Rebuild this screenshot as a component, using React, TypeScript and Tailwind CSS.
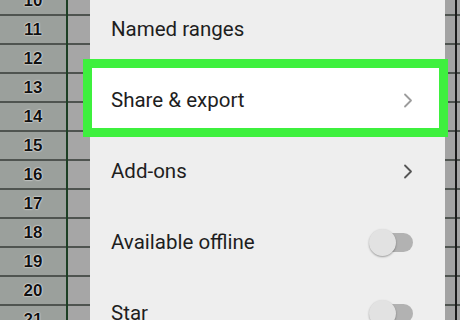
import { ReactNode } from 'react';

const rowNumbers = [10, 11, 12, 13, 14, 15, 16, 17, 18, 19, 20, 21];

type GridColumnProps = {
  width: string;
  bg: string;
  numbered?: boolean;
};

// strip of spreadsheet cells behind the menu
const GridColumn = ({ width, bg, numbered }: GridColumnProps) => {
  return (
    <div className={`${width} ${bg} h-full overflow-hidden shrink-0`}>
      <div className="flex flex-col -mt-[13px]">
        {rowNumbers.map((n) => (
          <div
            key={n}
            className="h-[29px] shrink-0 flex items-center justify-center border-b-2 border-[#4f5450]"
          >
            {numbered && (
              <span className="text-[17px] font-bold text-[#111] [font-family:'Liberation_Sans',Arial,sans-serif] [text-shadow:0_0_2px_#ffffff,0_0_1px_#ffffff]">
                {n}
              </span>
            )}
          </div>
        ))}
      </div>
    </div>
  );
};

const Chevron = ({ color }: { color: string }) => (
  <svg width="10" height="15" viewBox="0 0 10 15" fill="none">
    <path d="M2 1.5 L8 7.5 L2 13.5" stroke={color} strokeWidth="1.8" strokeLinecap="round" strokeLinejoin="round" />
  </svg>
);

const Toggle = () => (
  <div className="relative w-[44px] h-[27px]">
    <div className="absolute right-0 top-[4px] w-[30px] h-[19px] rounded-full bg-[#b2b2b2]" />
    <div className="absolute left-0 top-0 w-[27px] h-[27px] rounded-full bg-[#e2e2e2] shadow-[0_1px_2px_rgba(0,0,0,0.35)]" />
  </div>
);

type MenuItemProps = {
  label: string;
  right?: ReactNode;
  highlight?: boolean;
};

const MenuItem = ({ label, right, highlight }: MenuItemProps) => {
  return (
    <div className="relative h-[71px] shrink-0 flex items-center justify-between pl-[21px] pr-[32px]">
      {highlight && (
        <div className="absolute -top-[6px] -bottom-[1px] -left-[7px] -right-[3px] border-[9px] border-[#3ef03e] bg-white" />
      )}
      <span className="relative text-[20.5px] text-[#1e1e1e] [font-family:Roboto,'Noto_Sans',sans-serif]">
        {label}
      </span>
      <div className="relative flex items-center">{right}</div>
    </div>
  );
};

export default function App() {
  return (
    <div className="w-[460px] h-[320px] overflow-hidden flex bg-[#a2a2a2]">
      <GridColumn width="w-[66px]" bg="bg-[#9ba09c]" numbered />
      <div className="w-[2px] h-full bg-[#1d3f24] shrink-0" />
      <GridColumn width="w-[22px]" bg="bg-[#a6a6a6]" />
      <div className="flex-1 h-full bg-[#eeeeee] flex flex-col relative z-10">
        <div className="flex flex-col -mt-[6px]">
          <MenuItem label="Named ranges" />
          <MenuItem label="Share & export" highlight right={<Chevron color="#9c9c9c" />} />
          <MenuItem label="Add-ons" right={<Chevron color="#555555" />} />
          <MenuItem label="Available offline" right={<Toggle />} />
          <MenuItem label="Star" right={<Toggle />} />
        </div>
      </div>
      <GridColumn width="w-[10px]" bg="bg-[#a3a3a3]" />
      <div className="w-[2px] h-full bg-[#1a1a1a] shrink-0" />
      <GridColumn width="w-[3px]" bg="bg-[#a3a3a3]" />
    </div>
  );
}
